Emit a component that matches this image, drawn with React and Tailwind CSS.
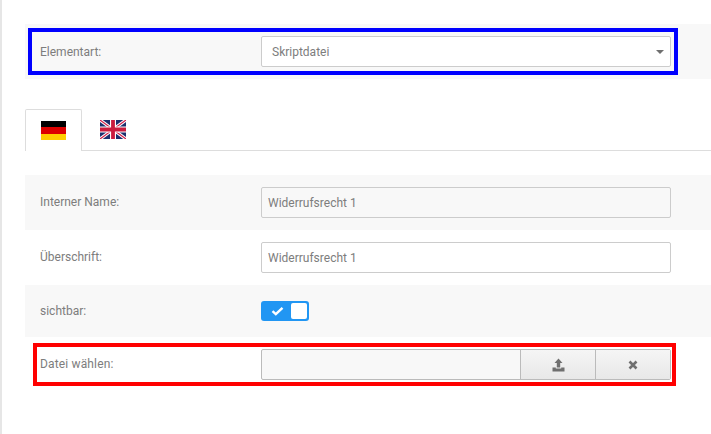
import React from "react";

const Flag = {
  de: (
    <svg width="25" height="19" viewBox="0 0 25 19" shapeRendering="crispEdges">
      <rect width="25" height="6.4" y="0" fill="#000" />
      <rect width="25" height="6.4" y="6.3" fill="#dd0000" />
      <rect width="25" height="6.4" y="12.6" fill="#ffce00" />
    </svg>
  ),
  uk: (
    <svg width="26" height="19" viewBox="0 0 26 19">
      <rect width="26" height="19" fill="#1c2f6e" />
      <path d="M0 0L26 19M26 0L0 19" stroke="#fff" strokeWidth="3.2" />
      <path d="M0 0L26 19M26 0L0 19" stroke="#d2204a" strokeWidth="1.2" />
      <path d="M13 0V19M0 9.5H26" stroke="#fff" strokeWidth="6" />
      <path d="M13 0V19M0 9.5H26" stroke="#ca1c3f" strokeWidth="3.8" />
    </svg>
  ),
};

function Row({ label, labelClass, shaded, h, children, overlay }) {
  return (
    <div className={`relative flex items-center pl-[15px] ${shaded ? "bg-[#f8f8f8]" : "bg-white"} ${h}`}>
      <div className={`w-[221px] shrink-0 text-[12px] text-[#7d7d7d] ${labelClass || ""}`}>{label}</div>
      <div className="w-[410px]">{children}</div>
      {overlay}
    </div>
  );
}

function Field({ value, disabled }) {
  return (
    <div className={`flex h-[31px] items-center rounded-[2px] border border-[#cccccc] px-[6px] text-[12px] text-[#7d7d7d] ${disabled ? "bg-[#f8f8f8]" : "bg-white"}`}>
      {value}
    </div>
  );
}

export default function App() {
  return (
    <div className="h-[434px] w-[711px] overflow-hidden bg-white font-['Roboto',sans-serif]">
      <div className="h-full border-l-2 border-[#e6e6e6] pl-[23px] pt-[24px]">
        <Row
          shaded
          label="Elementart:"
          h="h-[55px]"
          overlay={<div className="absolute left-[3px] top-[4px] h-[47px] w-[650px] border-[4px] border-[#0000ff]" />}
        >
          <div className="flex h-[31px] items-center justify-between rounded-[2px] border border-[#cccccc] bg-white pl-[10px] pr-[6px] text-[12px] text-[#7d7d7d]">
            <span>Skriptdatei</span>
            <span className="h-0 w-0 border-x-[4px] border-t-[4px] border-x-transparent border-t-[#6f6f6f]" />
          </div>
        </Row>

        <div className="mt-[30px] flex h-[42px] border-b-[1px] border-[#dddddd]">
          <div className="relative z-10 flex h-[42px] w-[57px] items-center justify-center rounded-t-[2px] border-x border-t border-[#dddddd] bg-white pb-[1px]">
            {Flag.de}
          </div>
          <div className="flex h-[41px] w-[59px] items-center justify-center pl-[3px]">{Flag.uk}</div>
        </div>

        <div className="mt-[24px]">
          <Row shaded label="Interner Name:" labelClass="pb-[2px]" h="h-[55px]">
            <Field value="Widerrufsrecht 1" disabled />
          </Row>
          <Row label="Überschrift:" labelClass="pb-[2px]" h="h-[55px]">
            <Field value="Widerrufsrecht 1" />
          </Row>
          <Row shaded label="sichtbar:" h="h-[52px]">
            <div className="flex h-[20px] w-[48px] items-center justify-between rounded-[3px] bg-[#2196f3] pl-[10px] pr-[2px]">
              <svg width="13" height="10" viewBox="0 0 13 10" fill="none">
                <path d="M1.5 5.2L4.8 8.2L11.5 1.8" stroke="#fff" strokeWidth="2.4" />
              </svg>
              <span className="h-[16px] w-[16px] rounded-[2px] bg-white" />
            </div>
          </Row>
          <Row
            label="Datei wählen:"
            labelClass="pb-[2px] tracking-[0.15px]"
            h="h-[55px]"
            overlay={<div className="absolute left-[8px] top-[6px] h-[43px] w-[643px] border-[4px] border-[#ff0000]" />}
          >
            <div className="flex h-[31px] rounded-[2px] border border-[#bbbbbb] bg-[#f8f8f8]">
              <div className="flex-1" />
              <div className="flex w-[75px] items-center justify-center border-l border-[#bbbbbb] bg-gradient-to-b from-[#f5f5f5] to-[#e8e8e8]">
                <svg width="13" height="14" viewBox="0 0 13 14" fill="#6f6f6f">
                  <path d="M6.5 0.5L10.5 5H8.2V9.5H4.8V5H2.5Z" />
                  <path d="M0.5 9.5H3.8V10.5H9.2V9.5H12.5V13.5H0.5Z" />
                </svg>
              </div>
              <div className="flex w-[75px] items-center justify-center border-l border-[#bbbbbb] bg-gradient-to-b from-[#f5f5f5] to-[#e8e8e8]">
                <svg width="10" height="10" viewBox="0 0 10 10" fill="none">
                  <path d="M1.5 1.5L8.5 8.5M8.5 1.5L1.5 8.5" stroke="#6f6f6f" strokeWidth="2.6" />
                </svg>
              </div>
            </div>
          </Row>
        </div>
      </div>
    </div>
  );
}
